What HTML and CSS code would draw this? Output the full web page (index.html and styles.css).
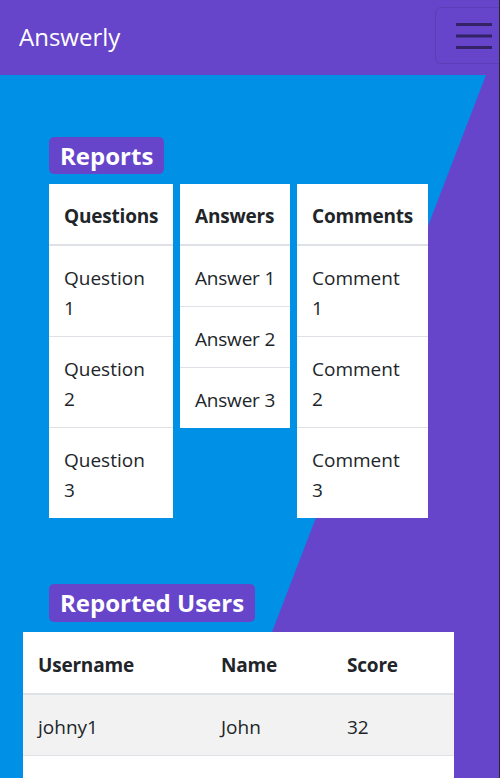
FILE: index.html
```html
<!DOCTYPE html>
<html lang="en">
<head>
<meta charset="utf-8">
<title>Answerly</title>
<link rel="stylesheet" href="styles.css">
</head>
<body>
<div class="page">
  <nav class="navbar">
    <a class="brand" href="#">Answerly</a>
    <button class="toggler" type="button" aria-label="Toggle navigation">
      <svg class="toggler-icon" width="36" height="30" viewBox="0 0 36 30">
        <path d="M0 3.5H36M0 15H36M0 26.5H36" stroke="rgba(0,0,0,0.5)" stroke-width="3" stroke-linecap="round" fill="none"/>
      </svg>
    </button>
  </nav>
  <main class="main">
    <section class="reports">
      <h2 class="badge-title">Reports</h2>
      <div class="report-tables">
        <table class="table t-questions">
          <thead><tr><th>Questions</th></tr></thead>
          <tbody>
            <tr><td>Question 1</td></tr>
            <tr><td>Question 2</td></tr>
            <tr><td>Question 3</td></tr>
          </tbody>
        </table>
        <table class="table t-answers">
          <thead><tr><th>Answers</th></tr></thead>
          <tbody>
            <tr><td>Answer 1</td></tr>
            <tr><td>Answer 2</td></tr>
            <tr><td>Answer 3</td></tr>
          </tbody>
        </table>
        <table class="table t-comments">
          <thead><tr><th>Comments</th></tr></thead>
          <tbody>
            <tr><td>Comment 1</td></tr>
            <tr><td>Comment 2</td></tr>
            <tr><td>Comment 3</td></tr>
          </tbody>
        </table>
      </div>
    </section>
    <section class="users">
      <h2 class="badge-title badge-users">Reported Users</h2>
      <table class="table t-users">
        <colgroup>
          <col class="c-user"><col class="c-name"><col class="c-score">
        </colgroup>
        <thead><tr><th>Username</th><th>Name</th><th>Score</th></tr></thead>
        <tbody>
          <tr class="striped"><td>johny1</td><td>John</td><td>32</td></tr>
          <tr><td>&nbsp;</td><td>&nbsp;</td><td>&nbsp;</td></tr>
        </tbody>
      </table>
    </section>
  </main>
</div>
</body>
</html>
```

FILE: styles.css
```css
* { box-sizing: border-box; }

html, body {
  margin: 0;
  padding: 0;
  background: #6645ca;
}

body {
  font-family: "Open Sans", "Noto Sans", sans-serif;
  font-size: 19px;
  line-height: 30px;
  color: #212529;
}

.page {
  width: 500px;
  min-height: 778px;
  overflow: hidden;
  border-right: 1px solid #27233f;
  background: #6645ca;
}

.navbar {
  display: flex;
  align-items: flex-start;
  height: 75px;
  padding: 7px 0 0 19px;
  background: #6645ca;
}

.brand {
  margin-top: 13px;
  font-size: 24px;
  line-height: 33px;
  color: #ffffff;
  text-decoration: none;
}

.toggler {
  margin-left: auto;
  margin-right: -6px;
  flex: none;
  display: flex;
  align-items: center;
  width: 70px;
  height: 57px;
  padding: 0 0 0 20px;
  background: transparent;
  border: 1px solid rgba(0, 0, 0, 0.1);
  border-radius: 6px;
}

.toggler-icon { display: block; }

.main {
  position: relative;
  min-height: 703px;
  padding-bottom: 40px;
}

.main::before {
  content: "";
  position: absolute;
  left: 0;
  top: 0;
  width: 500px;
  height: 1300px;
  background: #0091e6;
  clip-path: polygon(0 0, 486px 0, 0 1265px);
}

.reports, .users {
  position: relative;
}

.reports {
  padding: 62px 0 0 49px;
}

.badge-title {
  display: inline-block;
  margin: 0;
  padding: 4px 11px 3px;
  font-size: 24px;
  line-height: 30px;
  font-weight: 700;
  color: #ffffff;
  background: #6645ca;
  border-radius: 5px;
}

.report-tables {
  display: flex;
  align-items: flex-start;
  gap: 7px;
  margin-top: 10px;
}

.table {
  border-collapse: collapse;
  background: #ffffff;
  table-layout: fixed;
}

.table th,
.table td {
  padding: 17px 15px 13px;
  text-align: left;
  vertical-align: top;
}

.table th {
  font-weight: 700;
  letter-spacing: -0.2px;
  border-bottom: 2px solid #dee2e6;
}

.table tbody tr + tr td {
  border-top: 1px solid #dee2e6;
}

.t-questions { width: 124px; }
.t-answers { width: 110px; }
.t-answers td { white-space: nowrap; letter-spacing: -0.2px; }
.t-comments { width: 131px; }

.users {
  padding-top: 66px;
}

.badge-users {
  margin-left: 49px;
  padding-bottom: 4px;
}

.t-users {
  width: 431px;
  margin: 10px 0 0 23px;
}

.t-users th {
  border-top: 1px solid #ffffff;
}

.c-user { width: 183px; }
.c-name { width: 126px; }
.c-score { width: 122px; }

.striped td {
  background: #f2f2f2;
}
```
